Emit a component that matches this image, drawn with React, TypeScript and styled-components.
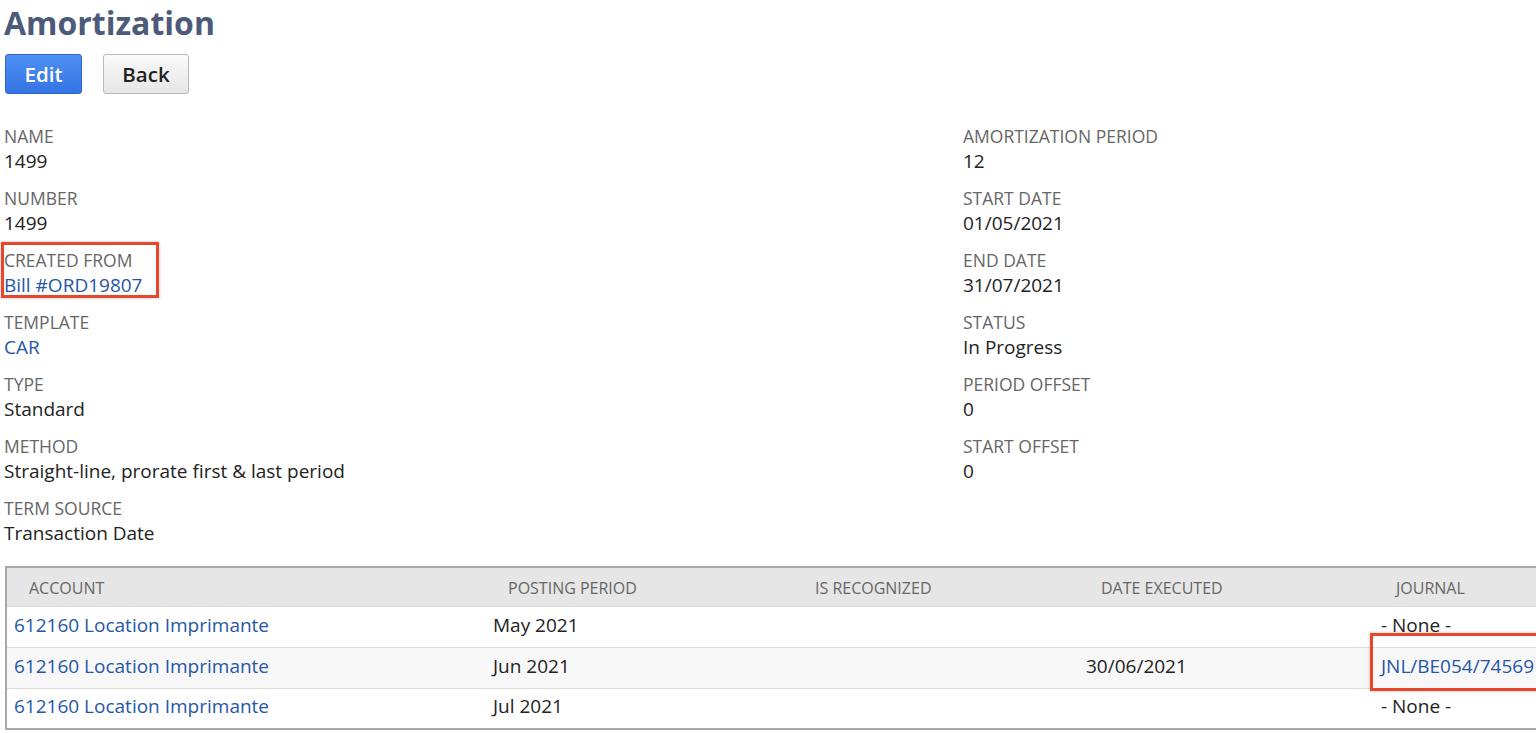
import React from "react";
import styled, { createGlobalStyle } from "styled-components";

const Global = createGlobalStyle`
  html, body { margin: 0; padding: 0; background: #fff; }
  body { font-family: "Open Sans", "Liberation Sans", sans-serif; overflow: hidden; }
`;

const Page = styled.div`
  position: relative;
  width: 1536px;
  height: 733px;
  overflow: hidden;
  padding: 0 0 0 4px;
  box-sizing: border-box;
`;

const Title = styled.h1`
  margin: 0;
  padding-top: 2px;
  font-size: 32px;
  line-height: 42px;
  font-weight: 700;
  color: #4b5b79;
`;

const Toolbar = styled.div`
  display: flex;
  gap: 21px;
  margin-top: 10px;
  padding-left: 1px;
`;

const Button = styled.button<{ $primary?: boolean }>`
  height: 40px;
  box-sizing: border-box;
  padding: 0;
  width: ${(p) => (p.$primary ? "77px" : "86px")};
  border-radius: 3px;
  font-family: "Open Sans", "Liberation Sans", sans-serif;
  font-size: 20.5px;
  font-weight: 600;
  cursor: pointer;
  border: 1px solid ${(p) => (p.$primary ? "#2c66cc" : "#b9b9b9")};
  color: ${(p) => (p.$primary ? "#ffffff" : "#222222")};
  background: ${(p) =>
    p.$primary
      ? "linear-gradient(#4f90f3, #3474e4)"
      : "linear-gradient(#fafafa, #e6e6e6)"};
`;

const Fields = styled.div`
  display: grid;
  grid-template-columns: 959px 1fr;
  margin-top: 30px;
`;

const Column = styled.div`
  display: flex;
  flex-direction: column;
`;

const Field = styled.div`
  display: flex;
  flex-direction: column;
  margin-bottom: 12px;
`;

const Label = styled.div`
  font-size: 17.5px;
  line-height: 24px;
  color: #666;
  text-transform: uppercase;
`;

const Value = styled.div`
  font-size: 19px;
  line-height: 26px;
  color: #222;
`;

const Link = styled.a`
  color: #2656a8;
  text-decoration: none;
`;

const TableWrap = styled.div`
  margin-top: 8px;
  margin-left: 1px;
  width: 1580px;
`;

const Table = styled.table`
  border-collapse: collapse;
  width: 100%;
  border: 2px solid #a8a8a8;
  table-layout: fixed;
`;

const Th = styled.th<{ $w: number }>`
  width: ${(p) => p.$w}px;
  height: 39px;
  padding: 2px 0 0 22px;
  background: #e6e6e6;
  text-align: left;
  font-weight: 400;
  font-size: 16px;
  color: #666;
  text-transform: uppercase;
  box-sizing: border-box;
`;

const Tr = styled.tr<{ $alt?: boolean }>`
  background: ${(p) => (p.$alt ? "#f8f8f8" : "#fff")};
  border-top: 1px solid #dcdcdc;
`;

const Td = styled.td`
  height: 41px;
  padding: 0 0 4px 7px;
  font-size: 19px;
  color: #222;
  box-sizing: border-box;
  white-space: nowrap;
`;

const Highlight = styled.div`
  position: absolute;
  border: 3px solid #e9462c;
  box-shadow: 0 0 3px rgba(0, 0, 0, 0.25);
  box-sizing: border-box;
  pointer-events: none;
`;

const left = [
  { label: "Name", value: "1499" },
  { label: "Number", value: "1499" },
  { label: "Created From", value: "Bill #ORD19807", link: true },
  { label: "Template", value: "CAR", link: true },
  { label: "Type", value: "Standard" },
  { label: "Method", value: "Straight-line, prorate first & last period" },
  { label: "Term Source", value: "Transaction Date" },
];

const right = [
  { label: "Amortization Period", value: "12" },
  { label: "Start Date", value: "01/05/2021" },
  { label: "End Date", value: "31/07/2021" },
  { label: "Status", value: "In Progress" },
  { label: "Period Offset", value: "0" },
  { label: "Start Offset", value: "0" },
];

const cols = [
  { h: "Account", w: 480 },
  { h: "Posting Period", w: 307 },
  { h: "Is Recognized", w: 286 },
  { h: "Date Executed", w: 295 },
  { h: "Journal", w: 212 },
];

const rows = [
  { period: "May 2021", date: "", journal: "- None -" },
  { period: "Jun 2021", date: "30/06/2021", journal: "JNL/BE054/74569", link: true },
  { period: "Jul 2021", date: "", journal: "- None -" },
];

type F = { label: string; value: string; link?: boolean };

const renderField = (f: F) => (
  <Field key={f.label}>
    <Label>{f.label}</Label>
    <Value>{f.link ? <Link href="#">{f.value}</Link> : f.value}</Value>
  </Field>
);

export default function App() {
  return (
    <>
      <Global />
      <Page>
        <Title>Amortization</Title>
        <Toolbar>
          <Button $primary>Edit</Button>
          <Button>Back</Button>
        </Toolbar>
        <Fields>
          <Column>{left.map(renderField)}</Column>
          <Column>{right.map(renderField)}</Column>
        </Fields>
        <TableWrap>
          <Table>
            <thead>
              <tr>
                {cols.map((c) => (
                  <Th key={c.h} $w={c.w}>
                    {c.h}
                  </Th>
                ))}
              </tr>
            </thead>
            <tbody>
              {rows.map((r, i) => (
                <Tr key={r.period} $alt={i === 1}>
                  <Td>
                    <Link href="#">612160 Location Imprimante</Link>
                  </Td>
                  <Td>{r.period}</Td>
                  <Td></Td>
                  <Td>{r.date}</Td>
                  <Td>{r.link ? <Link href="#">{r.journal}</Link> : r.journal}</Td>
                </Tr>
              ))}
            </tbody>
          </Table>
        </TableWrap>
        <Highlight style={{ left: 1, top: 242, width: 158, height: 56 }} />
        <Highlight style={{ left: 1370, top: 633, width: 172, height: 58 }} />
      </Page>
    </>
  );
}
